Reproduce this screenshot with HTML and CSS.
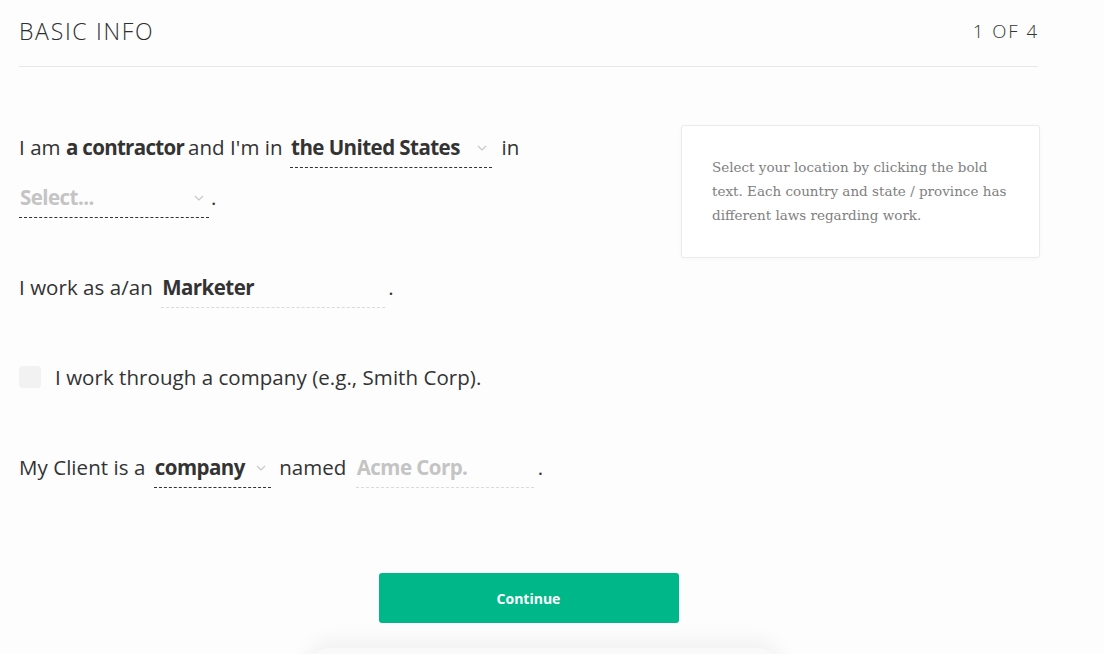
FILE: index.html
```html
<!DOCTYPE html>
<html lang="en">
<head>
<meta charset="utf-8">
<title>Basic Info</title>
<link rel="stylesheet" href="styles.css">
</head>
<body>
<div class="page">
  <header class="head">
    <h1 class="title">BASIC INFO</h1>
    <div class="step">1 OF 4</div>
  </header>

  <div class="body">
    <form class="form">
      <p class="sentence tall">I am <b class="strong">a contractor</b>and I'm in <span class="select w-country"><svg class="chev" viewBox="0 0 10 6"><polyline points="1,1 5,5 9,1"/></svg><span class="val">the United States</span></span> in <span class="select w-state"><svg class="chev" viewBox="0 0 10 6"><polyline points="1,1 5,5 9,1"/></svg><span class="val ph">Select...</span></span>.</p>

      <p class="sentence">I work as a/an <span class="input w-job"><span class="val">Marketer</span></span>.</p>

      <p class="sentence check-row"><span class="box"></span><span>I work through a company (e.g., Smith Corp).</span></p>

      <p class="sentence">My Client is a <span class="select w-type"><svg class="chev" viewBox="0 0 10 6"><polyline points="1,1 5,5 9,1"/></svg><span class="val">company</span></span> named <span class="input w-name"><span class="val ph">Acme Corp.</span></span>.</p>
    </form>

    <aside class="hint">
      Select your location by clicking the bold text. Each country and state / province has different laws regarding work.
    </aside>
  </div>

  <div class="actions">
    <button class="btn" type="button">Continue</button>
  </div>
  <div class="drawer"></div>
</div>
</body>
</html>
```

FILE: styles.css
```css
html, body {
  margin: 0;
  padding: 0;
  background: #fdfdfd;
  height: 100%;
  overflow: hidden;
}

.page {
  width: 1021px;
  margin-left: 19px;
  font-family: "Open Sans", "Liberation Sans", sans-serif;
  color: #333;
  position: relative;
  height: 654px;
}

.head {
  display: flex;
  justify-content: space-between;
  align-items: center;
  width: 1019px;
  height: 65px;
  border-bottom: 1px solid #e8e8e8;
  padding-bottom: 1px;
}

.title {
  margin: 0;
  font-weight: 300;
  font-size: 23px;
  letter-spacing: 1.7px;
  color: #2e2e2e;
  padding-bottom: 4px;
}

.step {
  font-size: 18.5px;
  font-weight: 300;
  letter-spacing: 2px;
  color: #333;
  padding-bottom: 4px;
  margin-right: -1px;
}

.body {
  display: flex;
  justify-content: space-between;
  margin-top: 55px;
}

.form {
  width: 640px;
}

.sentence {
  margin: 0 0 40px 0;
  font-size: 20.5px;
  letter-spacing: 0.05px;
  line-height: 50px;
  height: 50px;
  color: #333;
}

.sentence.tall {
  height: 100px;
}

.strong {
  font-weight: 700;
  letter-spacing: -0.7px;
  margin-right: 4px;
}

.select, .input {
  display: inline-block;
  box-sizing: border-box;
  line-height: 30px;
  padding: 0 1px 5px 1px;
}

.select {
  border-bottom: 1px dashed #333;
}

.input {
  border-bottom: 1px dashed #dadada;
}

.val {
  font-weight: 700;
  letter-spacing: -0.55px;
  color: #333;
}

.val.ph {
  color: #c4c4c4;
}

.chev {
  float: right;
  width: 10px;
  height: 6px;
  margin: 13px 4px 0 0;
  fill: none;
  stroke: #c8c8c8;
  stroke-width: 1.2;
}

.w-country { width: 202px; margin: 0 4px 0 2px; }
.w-state { width: 190px; margin: 0 2px 0 0; }
.w-job { width: 224px; margin: 0 3px 0 3px; }
.w-type { width: 117px; margin: 0 3px 0 3px; }
.w-name { width: 178px; margin: 0 4px 0 4px; }

.check-row {
  display: flex;
  align-items: center;
  gap: 14px;
}

.box {
  width: 22px;
  height: 22px;
  border-radius: 4px;
  background: #f2f2f2;
  flex: none;
}

.hint {
  box-sizing: border-box;
  width: 359px;
  height: 133px;
  margin-top: 3px;
  background: #fff;
  border: 1px solid #ebebeb;
  border-radius: 3px;
  box-shadow: 0 1px 4px rgba(0,0,0,0.03);
  padding: 29px 20px 0 30px;
  font-family: "DejaVu Serif", "Liberation Serif", serif;
  font-size: 13.5px;
  line-height: 24px;
  color: #808080;
}

.actions {
  display: flex;
  justify-content: center;
  width: 1019px;
  margin-top: 41px;
}

.btn {
  width: 300px;
  height: 50px;
  border: 0;
  border-radius: 3px;
  background: #00b789;
  color: #fff;
  font-family: "Open Sans", "Liberation Sans", sans-serif;
  font-size: 14px;
  font-weight: 700;
  cursor: pointer;
}

.drawer {
  position: absolute;
  left: 290px;
  width: 470px;
  top: 648px;
  height: 40px;
  background: #f9f9f9;
  border-radius: 20px;
  box-shadow: 0 -6px 22px rgba(0,0,0,0.06);
}
```
